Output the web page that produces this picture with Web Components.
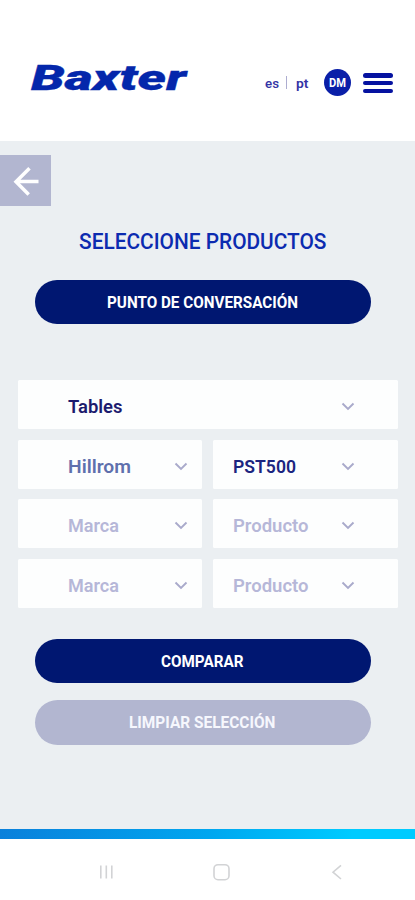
<!DOCTYPE html>
<html lang="es">
<head>
<meta charset="utf-8">
<title>Baxter</title>
<style>
html,body{margin:0;background:#fff}
body{font-family:Roboto,"Liberation Sans",sans-serif;width:415px;height:900px;overflow:hidden}
</style>
</head>
<body>
<product-screen></product-screen>
<script>
const define = (name, render) => customElements.define(name, class extends HTMLElement {
  connectedCallback() {
    if (this.shadowRoot) return;
    this.attachShadow({mode: 'open'}).innerHTML = render(this, (k, d = '') => this.getAttribute(k) ?? d);
  }
});

// Single line of text set to an exact width.
define('fit-text', (el, a) => `
<style>:host{display:block;width:${a('w')}px;height:${a('size')}px;flex:none}
svg{display:block;overflow:visible}
text{font-family:${a('font', "Roboto,'Liberation Sans',sans-serif")};font-size:${a('size')}px;font-weight:${a('weight', '600')};font-style:${a('slant', 'normal')};fill:currentColor;stroke:currentColor;stroke-width:${a('stroke', '0')}}</style>
<svg width="${a('w')}" height="${a('size')}"><text x="0" y="${+a('size') * 0.855}" textLength="${a('w')}" lengthAdjust="spacingAndGlyphs">${el.textContent}</text></svg>`);

define('app-header', () => `
<style>:host{display:flex;height:141px;box-sizing:border-box;padding:62px 22px 0 31px;align-items:flex-start;color:#0a1fa8;background:#fff}
.logo{color:#0427ab;width:155.5px;height:40px;margin-top:-2px}
.lang{display:flex;margin:15px 0 0 78.5px;color:#3434a5}
.lang fit-text{margin-top:-1.5px}
.sep{width:1px;height:13px;background:#adadd0;margin:-1px 9px 0 6.5px}
.avatar{width:27px;height:27px;border-radius:50%;background:#0a1fa8;color:#fff;display:flex;align-items:center;justify-content:center;margin:7px 0 0 15.5px}
.menu{margin:11px 0 0 12px;width:30px;height:20.4px;display:flex;flex-direction:column;justify-content:space-between}
.menu i{height:4.6px;border-radius:3px;background:#0512a0}</style>
<div class="logo"><fit-text w="155" size="35.5" weight="900" slant="italic" stroke="0.3">Baxter</fit-text></div>
<div class="lang"><fit-text w="14" size="13.5" weight="500">es</fit-text><span class="sep"></span><fit-text w="12.5" size="13.5" weight="600">pt</fit-text></div>
<div class="avatar"><fit-text w="17" size="12" weight="700">DM</fit-text></div>
<div class="menu"><i></i><i></i><i></i></div>`);

define('back-button', () => `
<style>:host{display:block;width:51px;height:51px;background:#b2b6d0}svg{display:block}</style>
<svg width="51" height="51" fill="none" stroke="#fff" stroke-width="3.5"><path d="M38.5 26.5H16M29.5 13.2 16 26.7 28.7 39.6"/></svg>`);

define('pill-button', (el, a) => `
<style>:host{display:flex;width:336px;height:44.5px;border-radius:23px;box-sizing:border-box;align-items:center;justify-content:center;background:${a('bg', '#001771')};color:${a('ink', '#fff')}}</style>
<fit-text w="${a('w')}" size="16.3" weight="700">${el.textContent}</fit-text>`);

define('select-box', (el, a) => `
<style>:host{display:flex;height:49px;box-sizing:border-box;background:#fdfefe;border-radius:1.5px;align-items:center;justify-content:space-between;padding:4px ${a('end', '14')}px 0 ${a('start', '50')}px;color:${a('ink', '#b6b7d8')}}
svg{display:block;margin-top:1px}</style>
<fit-text w="${a('w')}" size="19" weight="600">${el.textContent}</fit-text>
<svg width="14" height="10" fill="none" stroke="#a9aacb" stroke-width="1.9"><path d="M1.5 1.5 7 7 12.5 1.5"/></svg>`);

define('system-nav', () => `
<style>:host{display:grid;grid-template-columns:14px 18px 12px;column-gap:0;justify-content:space-between;align-items:center;padding:24.5px 72px 0 99px}svg{display:block}</style>
<svg width="14" height="18" stroke="#d2d3d5" stroke-width="1.6"><path d="M1.8 2.5v13M7.3 2.5v13M12.8 2.5v13"/></svg>
<svg width="18" height="18" fill="none" stroke="#d2d3d5" stroke-width="1.6"><rect x="1" y="1.7" width="15" height="15" rx="4"/></svg>
<svg width="12" height="18" fill="none" stroke="#d2d3d5" stroke-width="1.6"><path d="M10 2.3 2 9.2 10 16"/></svg>`);

define('product-screen', () => `
<style>:host{display:flex;flex-direction:column;height:900px}
main{height:688px;box-sizing:border-box;background:#ebeff2;padding-top:14px}
.title{color:#0c2bb0;padding:23.6px 0 0 78.5px}
.top{padding:28.4px 0 0 34.5px}
.form{display:grid;grid-template-columns:184px 185.5px;column-gap:10.5px;row-gap:10.5px;padding:56px 0 0 18px}
.wide{grid-column:1/3}
.actions{display:grid;row-gap:17px;padding:31px 0 0 34.5px}
.bar{height:9.5px;background:linear-gradient(90deg,#0a80db,#00a6ef 50%,#00cbff 85%)}</style>
<app-header></app-header>
<main>
<back-button></back-button>
<div class="title"><fit-text w="247.5" size="21.8" weight="500">SELECCIONE PRODUCTOS</fit-text></div>
<div class="top"><pill-button w="191">PUNTO DE CONVERSACIÓN</pill-button></div>
<div class="form">
<select-box class="wide" w="54.5" ink="#1c1b6e" end="43.5">Tables</select-box>
<select-box w="63" ink="#5f70ad">Hillrom</select-box><select-box w="63" start="20.5" end="43.5" ink="#1b2580">PST500</select-box>
<select-box w="51">Marca</select-box><select-box w="75.5" start="20.5" end="43.5">Producto</select-box>
<select-box w="51">Marca</select-box><select-box w="75.5" start="20.5" end="43.5">Producto</select-box>
</div>
<div class="actions"><pill-button w="82.5">COMPARAR</pill-button><pill-button w="146.5" bg="#b2b6d0" ink="#f6f7fd">LIMPIAR SELECCIÓN</pill-button></div>
</main>
<div class="bar"></div>
<system-nav></system-nav>`);
</script>
</body>
</html>
